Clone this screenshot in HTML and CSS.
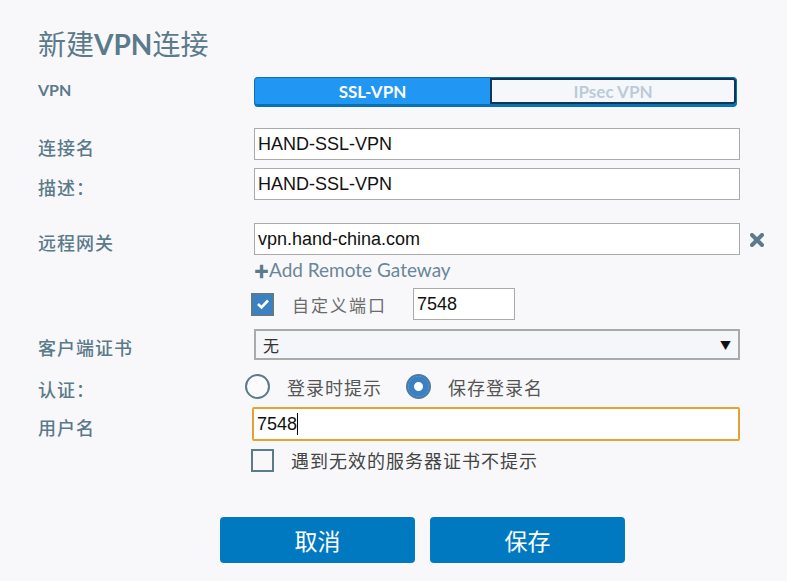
FILE: index.html
```html
<!DOCTYPE html>
<html lang="zh-CN">
<head>
<meta charset="utf-8">
<title>新建VPN连接</title>
<link rel="stylesheet" href="styles.css">
</head>
<body>
<div class="dialog">
  <h1 class="title">新建<b>VPN</b>连接</h1>

  <div class="row row-vpn">
    <div class="label label-en">VPN</div>
    <div class="toggle">
      <div class="seg seg-on">SSL-VPN</div>
      <div class="seg seg-off">IPsec VPN</div>
    </div>
  </div>

  <div class="row row-name">
    <div class="label">连接名</div>
    <div class="input">HAND-SSL-VPN</div>
  </div>

  <div class="row row-desc">
    <div class="label">描述：</div>
    <div class="input">HAND-SSL-VPN</div>
  </div>

  <div class="row row-gw">
    <div class="label">远程网关</div>
    <div class="field-with-icon">
      <div class="input">vpn.hand-china.com</div>
      <svg class="xicon" width="14" height="14" viewBox="0 0 14 14"><path d="M2 2 L12 12 M12 2 L2 12" stroke="#5b7a8a" stroke-width="4" stroke-linecap="round"/></svg>
    </div>
  </div>

  <div class="row row-add">
    <div class="label"></div>
    <div class="add"><span class="plus">✚</span>Add Remote Gateway</div>
  </div>

  <div class="row row-port">
    <div class="label"></div>
    <div class="port">
      <span class="cb cb-on"><svg width="14" height="12" viewBox="0 0 14 12"><path d="M2 6 L5.5 9.5 L12 2.5" fill="none" stroke="#fff" stroke-width="2.6"/></svg></span>
      <span class="port-text">自定义端口</span>
      <div class="input input-port">7548</div>
    </div>
  </div>

  <div class="row row-cert">
    <div class="label">客户端证书</div>
    <div class="select"><span>无</span><span class="arrow">▼</span></div>
  </div>

  <div class="row row-auth">
    <div class="label">认证：</div>
    <div class="radios">
      <span class="radio"></span><span class="radio-text">登录时提示</span>
      <span class="radio radio-on"></span><span class="radio-text">保存登录名</span>
    </div>
  </div>

  <div class="row row-user">
    <div class="label">用户名</div>
    <div class="input input-focus">7548<span class="caret"></span></div>
  </div>

  <div class="row row-ignore">
    <div class="label"></div>
    <div class="port">
      <span class="cb"></span>
      <span class="ignore-text">遇到无效的服务器证书不提示</span>
    </div>
  </div>

  <div class="buttons">
    <button class="btn">取消</button>
    <button class="btn">保存</button>
  </div>
</div>
</body>
</html>
```
FILE: styles.css
```css
* { box-sizing: border-box; }
html, body {
  margin: 0;
  padding: 0;
  background: #f8f8fb;
}
body {
  font-family: "Noto Sans CJK SC", "Noto Sans", sans-serif;
  color: #5b7a8a;
  width: 787px;
  height: 581px;
  overflow: hidden;
}
.dialog {
  padding: 21px 0 0 38px;
}
.title {
  margin: 0;
  height: 44px;
  line-height: 44px;
  font-size: 28px;
  font-weight: normal;
  color: #5b7a8a;
}
.title b {
  font-family: Lato, "Noto Sans", sans-serif;
  font-weight: bold;
}
.row {
  display: grid;
  grid-template-columns: 216px 486px;
  align-items: center;
}
.label {
  font-size: 18px;
  letter-spacing: 1px;
  font-weight: 500;
  color: #5b7a8a;
  padding-top: 5px;
}
.label-en {
  font-family: Lato, "Noto Sans", sans-serif;
  font-weight: bold;
  font-size: 16px;
  letter-spacing: 0;
  padding-top: 0;
  margin-top: -6px;
}
.row-vpn { margin-top: 12px; height: 30px; }
.row-name { margin-top: 21px; }
.row-desc { margin-top: 8px; }
.row-gw { margin-top: 23px; }
.row-add { height: 24px; margin-top: 3px; }
.row-port { margin-top: 6px; }
.row-cert { margin-top: 9px; }
.row-auth { margin-top: 11px; height: 26px; }
.row-user { margin-top: 10px; }
.row-ignore { margin-top: 6px; height: 24px; }

.toggle {
  display: flex;
  width: 483px;
  height: 30px;
  border: 1px solid #0a70b4;
  border-bottom-width: 3px;
  border-radius: 4px;
  background: #2196f3;
  overflow: hidden;
}
.seg {
  font-family: Lato, "Noto Sans", sans-serif;
  font-weight: bold;
  font-size: 17px;
  display: flex;
  align-items: center;
  justify-content: center;
}
.seg-on {
  width: 235px;
  color: #fff;
}
.seg-off {
  flex: 1;
  background: #f6f7fb;
  border: 2px solid #0e3658;
  border-radius: 0 3px 3px 0;
  color: #b9ccd8;
}
.input {
  height: 32px;
  width: 486px;
  background: #fff;
  border: 1px solid #aaaaaa;
  font-family: "Liberation Sans", Arial, sans-serif;
  font-size: 18px;
  color: #111;
  line-height: 30px;
  padding-left: 3px;
}
.field-with-icon {
  position: relative;
}
.xicon {
  position: absolute;
  left: 496px;
  top: 10px;
}
.add {
  font-family: Lato, "Noto Sans", sans-serif;
  font-size: 19px;
  color: #6a8797;
  line-height: 24px;
}
.plus {
  font-size: 15px;
  color: #5b7a8a;
}
.port {
  display: flex;
  align-items: center;
  margin-left: -3px;
}
.cb {
  width: 23px;
  height: 23px;
  border: 2px solid #5b7a8a;
  display: flex;
  align-items: center;
  justify-content: center;
  flex: none;
}
.cb-on {
  background: #3a80c4;
}
.port-text {
  margin-left: 18px;
  font-size: 17px;
  color: #6b6b6b;
  letter-spacing: 2px;
  width: 121px;
}
.input-port {
  width: 102px;
}
.select {
  height: 31px;
  width: 486px;
  border: 2px solid #aaaaaa;
  background: #f5f6f9;
  display: flex;
  align-items: center;
  justify-content: space-between;
  padding: 0 7px 0 7px;
  font-size: 16px;
  color: #333;
}
.arrow {
  font-size: 11px;
  color: #111;
}
.radios {
  display: flex;
  align-items: center;
  margin-left: -9px;
}
.radio {
  width: 25px;
  height: 25px;
  border-radius: 50%;
  border: 2px solid #5b7a8a;
  background: #fbfbfd;
  flex: none;
}
.radio-on {
  background: #3a80c4;
  border-color: #4a7ba0;
  box-shadow: inset 0 0 0 6px #3a80c4, inset 0 0 0 12px #fff;
}
.radio-text {
  font-size: 18px;
  letter-spacing: 1px;
  color: #555;
  margin-left: 17px;
  margin-right: 24px;
}
.input-focus {
  height: 34px;
  width: 488px;
  margin-left: -2px;
  border: 2px solid #e1a333;
  border-radius: 2px;
  line-height: 30px;
  display: flex;
  align-items: center;
}
.caret {
  display: inline-block;
  width: 1px;
  height: 22px;
  background: #000;
}
.ignore-text {
  margin-left: 17px;
  font-size: 18px;
  letter-spacing: 1px;
  color: #444;
}
.buttons {
  display: flex;
  gap: 15px;
  margin-top: 46px;
  margin-left: 182px;
}
.btn {
  width: 195px;
  height: 46px;
  border: none;
  border-radius: 4px;
  background: #0079c1;
  color: #fff;
  font-family: "Noto Sans CJK SC", sans-serif;
  font-size: 23px;
  padding: 0;
}
```
